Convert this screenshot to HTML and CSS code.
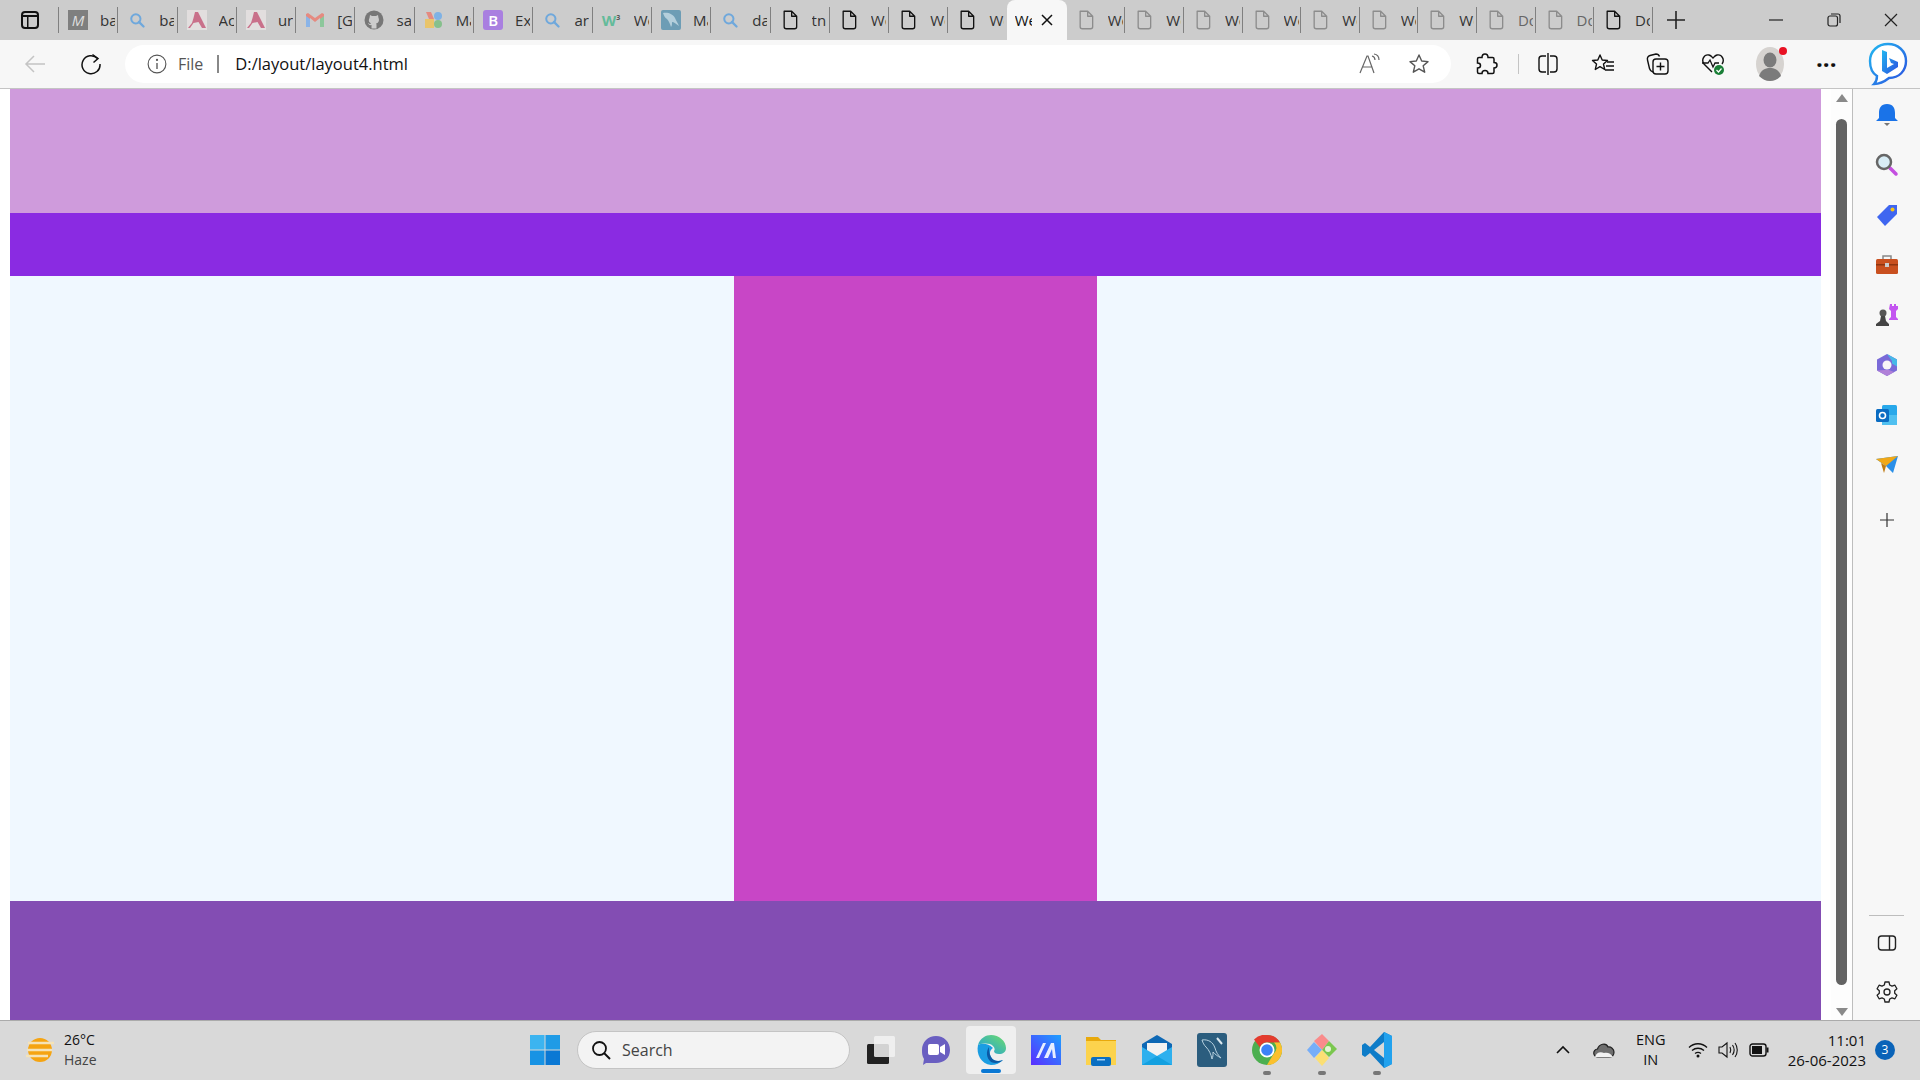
FILE: index.html
```html
<!DOCTYPE html>
<html lang="en">
<head>
    <meta charset="UTF-8">
    <meta name="viewport" content="width=device-width, initial-scale=1.0">
    <title>layout4</title>
    <link rel="stylesheet" href="styles.css">
</head>
<body>
    <svg class="defs" width="0" height="0">
        <symbol id="doc" viewBox="0 0 20 24"><path d="M3 1.5h9l6 6v12.5a2.5 2.5 0 0 1-2.5 2.500h-10a2.500 2.500 0 0 1-2.500-2.500z M12 1.500v6h6" fill="none" stroke="currentColor" stroke-width="1.600" stroke-linejoin="round"/></symbol>
        <symbol id="find" viewBox="-3 -3 26 26"><circle cx="8.500" cy="8.500" r="6" fill="none" stroke="#6fa8dc" stroke-width="2.600"/><path d="M12.500 12.500l6 6" stroke="#6fa8dc" stroke-width="3" stroke-linecap="round"/></symbol>
        <symbol id="acro" viewBox="0 0 20 20"><rect width="20" height="20" fill="#e2dede"/><path d="M8 2h3l8 16h-4l-3.500-6-5 1L3 18H1l4-5c1-3 2-7 3-11z" fill="#c9708a"/></symbol>
        <linearGradient id="edgeTop" x1="0" y1="1" x2="1" y2="0"><stop offset="0" stop-color="#1b9de2"/><stop offset="1" stop-color="#6fdc6a"/></linearGradient>
    </svg>

    <div class="tabstrip">
        <div class="winbtn">
            <svg width="20" height="20" viewBox="0 0 20 20"><rect x="2" y="2" width="16" height="16" rx="3" fill="none" stroke="#111" stroke-width="2"/><path d="M2 5h16v2H2z M7 6h1.500v12H7z" fill="#111"/></svg>
        </div>
        <div class="tabs">
            <div class="tab"><span class="favicon mbox">M</span><span class="tabtext">ba</span></div>
            <div class="tab"><svg class="favicon"><use href="#find"/></svg><span class="tabtext">ba</span></div>
            <div class="tab"><svg class="favicon"><use href="#acro"/></svg><span class="tabtext">Ac</span></div>
            <div class="tab"><svg class="favicon"><use href="#acro"/></svg><span class="tabtext">ur</span></div>
            <div class="tab"><svg class="favicon" viewBox="0 0 20 20"><path d="M1 4v13h4V8l5 4 5-4v9h4V4l-2-1-7 5-7-5z" fill="#e58a80"/><path d="M1 6v11h4V9z" fill="#8ab4e8"/><path d="M15 9v8h4V6z" fill="#8cc79b"/></svg><span class="tabtext">[G</span></div>
            <div class="tab"><svg class="favicon" viewBox="0 0 20 20"><circle cx="10" cy="10" r="9.500" fill="#777"/><path d="M6 5l2 1h4l2-1 .5 3c1 2 .5 5-2.500 5.500.5.500.5 1 .5 1.500v3.500h-5V15c-2 .5-3-.500-3.500-2 1 .5 1.500 1 2.500 1 0-.5.100-.5.500-.8C4.500 12.500 4.500 10 5.500 8z" fill="#ccc"/></svg><span class="tabtext">sa</span></div>
            <div class="tab"><svg class="favicon" viewBox="0 0 20 20"><rect x="1" y="9" width="9" height="9" fill="#e9c46a"/><path d="M2 2h5l3 7H5z" fill="#e58a80"/><rect x="10" y="2" width="8" height="8" rx="4" fill="#7fb2e5"/><rect x="10" y="10" width="8" height="8" rx="4" fill="#86c08c"/></svg><span class="tabtext">Ma</span></div>
            <div class="tab"><span class="favicon bbox">B</span><span class="tabtext">Ex</span></div>
            <div class="tab"><svg class="favicon"><use href="#find"/></svg><span class="tabtext">ar</span></div>
            <div class="tab"><span class="favicon w3">W<sup>3</sup></span><span class="tabtext">We</span></div>
            <div class="tab"><svg class="favicon" viewBox="0 0 20 20"><rect width="20" height="20" rx="2" fill="#6d9db5"/><path d="M2 3c5-1 10 1 12 5 1 3 3 5 4 8-3-2-5-4-7-4 0 2 0 4-1 5-1-3-2-6-4-8-2-1-3-3-4-6z" fill="#b4cfdc"/></svg><span class="tabtext">Ma</span></div>
            <div class="tab"><svg class="favicon"><use href="#find"/></svg><span class="tabtext">da</span></div>
            <div class="tab"><svg class="favicon"><use href="#doc"/></svg><span class="tabtext">tn</span></div>
            <div class="tab"><svg class="favicon"><use href="#doc"/></svg><span class="tabtext">We</span></div>
            <div class="tab"><svg class="favicon"><use href="#doc"/></svg><span class="tabtext">We</span></div>
            <div class="tab"><svg class="favicon"><use href="#doc"/></svg><span class="tabtext">We</span></div>
            <div class="tab active"><span class="tabtext">We</span><svg width="14" height="14" viewBox="0 0 14 14"><path d="M2 2l10 10M12 2L2 12" stroke="#111" stroke-width="1.500"/></svg></div>
            <div class="tab muted"><svg class="favicon"><use href="#doc"/></svg><span class="tabtext">We</span></div>
            <div class="tab muted"><svg class="favicon"><use href="#doc"/></svg><span class="tabtext">We</span></div>
            <div class="tab muted"><svg class="favicon"><use href="#doc"/></svg><span class="tabtext">We</span></div>
            <div class="tab muted"><svg class="favicon"><use href="#doc"/></svg><span class="tabtext">We</span></div>
            <div class="tab muted"><svg class="favicon"><use href="#doc"/></svg><span class="tabtext">We</span></div>
            <div class="tab muted"><svg class="favicon"><use href="#doc"/></svg><span class="tabtext">We</span></div>
            <div class="tab muted"><svg class="favicon"><use href="#doc"/></svg><span class="tabtext">We</span></div>
            <div class="tab muted"><svg class="favicon"><use href="#doc"/></svg><span class="tabtext grey">Do</span></div>
            <div class="tab muted"><svg class="favicon"><use href="#doc"/></svg><span class="tabtext grey">Do</span></div>
            <div class="tab muted last"><svg class="favicon dark"><use href="#doc"/></svg><span class="tabtext">Do</span></div>
        </div>
        <svg class="newtab" width="20" height="20" viewBox="0 0 20 20"><path d="M10 1v18M1 10h18" stroke="#222" stroke-width="1.600"/></svg>
        <div class="wincontrols">
            <svg width="14" height="14" viewBox="0 0 14 14"><path d="M0 7h14" stroke="#222" stroke-width="1.200"/></svg>
            <svg width="14" height="14" viewBox="0 0 14 14"><rect x="1" y="3" width="9.500" height="10" rx="2" fill="none" stroke="#222" stroke-width="1.200"/><path d="M4 1h7a2 2 0 0 1 2 2v7" fill="none" stroke="#222" stroke-width="1.200"/></svg>
            <svg width="14" height="14" viewBox="0 0 14 14"><path d="M1 1l12 12M13 1L1 13" stroke="#222" stroke-width="1.200"/></svg>
        </div>
    </div>

    <div class="toolbar">
        <svg class="back" width="22" height="20" viewBox="0 0 22 20"><path d="M21 10H2M10 2l-8 8 8 8" fill="none" stroke="#c4c4c4" stroke-width="1.500"/></svg>
        <svg class="reload" width="22" height="22" viewBox="0 0 22 22"><path d="M17.500 5.500A9 9 0 1 0 20 11" fill="none" stroke="#111" stroke-width="1.500"/><path d="M12.500 1.500l5.500 4-4.500 4" fill="none" stroke="#111" stroke-width="1.500"/></svg>
        <div class="address">
            <svg width="20" height="20" viewBox="0 0 18 18"><circle cx="9" cy="9" r="8" fill="none" stroke="#555" stroke-width="1"/><path d="M9 8v5.500" stroke="#555" stroke-width="1.200"/><circle cx="9" cy="5.300" r="1" fill="#555"/></svg>
            <span class="scheme">File</span>
            <span class="addr-sep"></span>
            <span class="url">D:/layout/layout4.html</span>
            <div class="addr-icons">
                <svg width="22" height="22" viewBox="0 0 22 22"><path d="M1 20L8 3h1l6 17M3.500 14h10" fill="none" stroke="#666" stroke-width="1.200"/><path d="M13 3c2 .5 3 2 3 4M15 1c3 .5 5 3 5 6" fill="none" stroke="#666" stroke-width="1.200"/></svg>
                <svg width="22" height="22" viewBox="0 0 22 22"><path d="M11 2l2.700 6 6.300.6-4.800 4.200 1.500 6.400L11 15.800l-5.700 3.400 1.500-6.400L2 8.600 8.300 8z" fill="none" stroke="#555" stroke-width="1.400" stroke-linejoin="round"/></svg>
            </div>
        </div>
        <div class="tools">
            <svg class="tool-ext" width="22" height="24" viewBox="0 0 22 24"><path d="M9 2c2 0 3 1.500 3 3.500h4.500c1 0 1.500.500 1.500 1.500v3.500c2 0 3 1 3 2.500s-1 3-3 3V20c0 1-.5 1.500-1.500 1.500H12c0-2-1-3-3-3s-3 1-3 3H3c-1 0-1.500-.5-1.500-1.500v-4c2 0 3-1 3-2.500s-1-2.500-3-2.500V7c0-1 .5-1.500 1.500-1.500h3C6 3.500 7 2 9 2z" fill="none" stroke="#111" stroke-width="1.500"/></svg>
            <span class="tool-sep"></span>
            <svg class="tool-split" width="20" height="22" viewBox="0 0 20 22"><rect x="1" y="3" width="18" height="16" rx="3" fill="none" stroke="#111" stroke-width="1.400"/><path d="M10 0v22" stroke="#f7f7f7" stroke-width="4"/><path d="M10 0v22" stroke="#111" stroke-width="1.400"/></svg>
            <svg class="tool-favs" width="24" height="22" viewBox="0 0 24 22"><path d="M9 2l2.200 5 5.300.5-4 3.600 1.200 5.400L9 13.700l-4.700 2.800 1.200-5.400-4-3.600L6.800 7z" fill="none" stroke="#111" stroke-width="1.400" stroke-linejoin="round"/><path d="M16 9h7M15 13h8M14 17h9" stroke="#111" stroke-width="1.400"/></svg>
            <svg class="tool-coll" width="24" height="24" viewBox="0 0 24 24"><path d="M7 20c-2-.5-3-1.500-3.500-3.500L1.500 8C1 6 2 4 4 3.500l6-1.500c2 0 3 1 3.500 2.500" fill="none" stroke="#111" stroke-width="1.400"/><rect x="7" y="7" width="15" height="15" rx="3" fill="none" stroke="#111" stroke-width="1.400"/><path d="M14.500 10.500v8M10.500 14.500h8" stroke="#111" stroke-width="1.400"/></svg>
            <svg class="tool-health" width="24" height="24" viewBox="0 0 24 24"><path d="M11 20L3 12C0 8 3 2 8 3c2 .5 3 2 4 3 1-1 2-2.500 4-3 5-1 8 5 5 9" fill="none" stroke="#111" stroke-width="1.400"/><path d="M1 11h6l2-3 3 7 2-4h4" fill="none" stroke="#111" stroke-width="1.300"/><circle cx="18" cy="18" r="5" fill="#1a7f37"/><path d="M15.500 18l2 2 3-3.500" fill="none" stroke="#fff" stroke-width="1.200"/></svg>
            <div class="avatar">
                <svg width="28" height="34" viewBox="0 0 28 34"><ellipse cx="14" cy="17" rx="14" ry="17" fill="#d6d3d0"/><ellipse cx="14" cy="13" rx="6.500" ry="7.500" fill="#7b7b7b"/><path d="M3 29c2-6 6-8 11-8s9 2 11 8c-3 3-7 5-11 5s-8-2-11-5z" fill="#7b7b7b"/></svg>
                <span class="dot"></span>
            </div>
            <span class="more">&middot;&middot;&middot;</span>
        </div>
        <svg class="bing" width="40" height="48" viewBox="0 0 40 48"><defs><linearGradient id="bingB" x1="0" y1="0" x2="1" y2="1"><stop offset="0" stop-color="#22b8f0"/><stop offset="1" stop-color="#2b4fe0"/></linearGradient></defs><path d="M20 4c10 0 18 7 18 17s-7 17-17 17c-5 4-11 6-15 6 2-2 3-4 3-8C4 33 2 27 2 21 2 11 10 4 20 4z" fill="#fff" stroke="url(#bingB)" stroke-width="2.400"/><path d="M14 10l5 2v16l7-4-3-1-2-5 9 4v5l-11 7-5-3z" fill="url(#bingB)"/></svg>
    </div>

    <div class="browser">
        <div class="viewport">
            <div class="layout">
                <header class="top"></header>
                <nav class="navbar"></nav>
                <main class="columns">
                    <section class="side"></section>
                    <section class="middle"></section>
                    <section class="side"></section>
                </main>
                <footer class="bottom"></footer>
            </div>
            <div class="scrollbar">
                <span class="arrow up"></span>
                <span class="thumb"></span>
                <span class="arrow down"></span>
            </div>
        </div>
        <aside class="sidebar">
            <svg width="24" height="24" viewBox="0 0 24 24"><path d="M12 1c6 0 8 4 8 9v5l3 3H1l3-3v-5c0-5 2-9 8-9z" fill="#1a73e8"/><path d="M9 20h6l-3 3z" fill="#777"/></svg>
            <svg width="24" height="24" viewBox="0 0 24 24"><path d="M15 15l6 6" stroke="#c44fe0" stroke-width="3.500" stroke-linecap="round"/><circle cx="9" cy="9" r="7" fill="#d8ecf5" stroke="#666" stroke-width="2.500"/></svg>
            <svg width="24" height="24" viewBox="0 0 24 24"><path d="M2 14L14 2h8v9L10 23z" fill="#3f66f0"/><circle cx="17.500" cy="6.500" r="2" fill="#f5c518"/></svg>
            <svg width="24" height="24" viewBox="0 0 24 24"><path d="M8 6V3h8v3" fill="none" stroke="#888" stroke-width="1.500"/><rect x="1" y="6" width="22" height="15" rx="1.500" fill="#c9501f"/><rect x="1" y="11" width="22" height="1.500" fill="#8f3510"/><rect x="10" y="10" width="4" height="4" fill="#ccc"/></svg>
            <svg width="24" height="24" viewBox="0 0 24 24"><path d="M15 1h2v2h2V1h2v2h2v3l-2 2v6l2 2v1h-9v-1l2-2V8l-2-2z" fill="#c355f0"/><circle cx="8" cy="10" r="3.500" fill="#555"/><path d="M6 13h4l1 5 3 3v2H1v-2l4-3z" fill="#444"/></svg>
            <svg width="24" height="24" viewBox="0 0 24 24"><path d="M12 1l10 5.500v11L12 23 2 17.500v-11z" fill="#7a6ad8"/><path d="M12 1l10 5.500v7l-5-3V8z" fill="#46b8e8"/><path d="M2 17.500l10 5.500 7-4-5-2-4 0z" fill="#b080d8"/><circle cx="12" cy="12" r="4.500" fill="#f7f7f7"/></svg>
            <svg width="24" height="24" viewBox="0 0 24 24"><rect x="7" y="2" width="15" height="20" rx="1.500" fill="#28a8ea"/><path d="M7 12h15v10H7z" fill="#50c0f0"/><rect x="1" y="6" width="13" height="13" rx="1.500" fill="#0a6cc2"/><circle cx="7.500" cy="12.500" r="3" fill="none" stroke="#fff" stroke-width="1.600"/></svg>
            <svg width="24" height="24" viewBox="0 0 24 24"><path d="M1 6l22-3-5 17-7-7z" fill="#2a8fe8"/><path d="M1 6l10 7 12-10z" fill="#f0a818"/><path d="M6 10l3 10 2-7z" fill="#c07a10"/></svg>
            <svg class="side-add" width="16" height="16" viewBox="0 0 16 16"><path d="M8 1v14M1 8h14" stroke="#333" stroke-width="1.200"/></svg>
            <span class="side-sep"></span>
            <svg width="20" height="18" viewBox="0 0 20 18"><rect x="1.500" y="2" width="17" height="14" rx="3" fill="none" stroke="#222" stroke-width="1.400"/><path d="M12.500 2v14" stroke="#222" stroke-width="1.400"/></svg>
            <svg class="gear" width="22" height="22" viewBox="0 0 22 22"><path d="M9 1h4l.7 3 2.300 1.200 2.900-1 2 3.500-2.200 2 0 2.600 2.200 2-2 3.500-2.900-1-2.300 1.200-.7 3H9l-.7-3L6 16.800l-2.900 1-2-3.500 2.200-2 0-2.600-2.200-2 2-3.500 2.900 1L8.300 4z" fill="none" stroke="#222" stroke-width="1.300" stroke-linejoin="round"/><circle cx="11" cy="11" r="3" fill="none" stroke="#222" stroke-width="1.300"/></svg>
        </aside>
    </div>

    <div class="taskbar">
        <div class="weather">
            <svg width="30" height="26" viewBox="0 0 30 26"><circle cx="15" cy="13" r="12" fill="#f5a412"/><path d="M3 6h26M2 13h25M1 19h22" stroke="#f5e3b8" stroke-width="2.500"/></svg>
            <div class="weather-text">
                <span>26°C</span>
                <span class="haze">Haze</span>
            </div>
        </div>
        <div class="apps">
            <svg class="app start" width="30" height="30" viewBox="0 0 30 30"><rect width="14.500" height="14.500" fill="#3cb4f0"/><rect x="15.500" width="14.500" height="14.500" fill="#1f9be6"/><rect y="15.500" width="14.500" height="14.500" fill="#1893e4"/><rect x="15.500" y="15.500" width="14.500" height="14.500" fill="#0a78d4"/></svg>
            <div class="search">
                <svg width="20" height="20" viewBox="0 0 20 20"><circle cx="8.500" cy="8.500" r="6.500" fill="none" stroke="#111" stroke-width="1.800"/><path d="M13 13l6 6" stroke="#111" stroke-width="2"/></svg>
                <span>Search</span>
            </div>
            <div class="appicons">
                <span class="appicon"><svg width="30" height="30" viewBox="0 0 30 30"><rect x="1" y="9" width="22" height="20" rx="1.500" fill="#222"/><rect x="8" y="1" width="21" height="21" rx="1.500" fill="#f2f2f2" opacity=".85"/></svg></span>
                <span class="appicon"><svg width="30" height="32" viewBox="0 0 30 32"><path d="M15 2c8 0 14 6 14 14s-6 13-14 13H5l-3 2 1-6C1 22 1 19 1 16 1 8 7 2 15 2z" fill="#6a5fc1"/><rect x="7" y="10" width="11" height="11" rx="2" fill="#fff"/><path d="M19 13l5-3v11l-5-3z" fill="#fff"/></svg></span>
                <span class="appicon current"><svg width="30" height="30" viewBox="0 0 30 30"><path d="M2 10C0 19 5 29 15 30c5 0 9-2 12-5-5 2-10 1-12-3-2-4-1-7 2-9C12 8 6 8 2 10z" fill="#1b9de2"/><path d="M13 12c-3 4-3 11 2 15 4 2 9 1 12-2-5 2-10 1-12-3-2-3-2-7-2-10z" fill="#0c59a4"/><path d="M2 10C4 3 10 0 15 0c8 0 15 6 15 13 0 4-3 6-7 6-3 0-5-1-5-3 1-1 1-3-1-5C14 8 8 8 2 10z" fill="url(#edgeTop)"/></svg><span class="running"></span></span>
                <span class="appicon"><svg width="30" height="30" viewBox="0 0 30 30"><defs><linearGradient id="mas" x1="0" y1="1" x2="1" y2="0"><stop offset="0" stop-color="#5a2dff"/><stop offset="1" stop-color="#1ea0ff"/></linearGradient></defs><rect width="30" height="30" fill="url(#mas)"/><path d="M5 23l7-15h3l-7 15zM13 23l7-15h3l2 15h-3l-1-9-4 9z" fill="#e8eeff"/></svg></span>
                <span class="appicon"><svg width="30" height="32" viewBox="0 0 30 32"><path d="M0 3h12l3 3h15v25H0z" fill="#e8a90c"/><rect y="7" width="30" height="24" fill="#fcd34d"/><rect x="5" y="23" width="20" height="9" rx="2" fill="#0a6fc2"/><rect x="11" y="25" width="8" height="1.500" fill="#9ed0f5"/></svg></span>
                <span class="appicon"><svg width="30" height="32" viewBox="0 0 30 32"><path d="M15 1L0 10v20h30V10z" fill="#0e68b5"/><path d="M5 9h20v8l-10 6-10-6z" fill="#f2f2f2"/><path d="M0 13l15 9 15-9v18H0z" fill="#2eb0ee"/><path d="M0 31l15-9 15 9z" fill="#13a0e0"/></svg></span>
                <span class="appicon"><svg width="30" height="34" viewBox="0 0 30 34"><rect width="30" height="34" rx="3" fill="#2b5d7e"/><path d="M5 7c6-1 11 2 13 8 1 4 3 7 6 10-4-2-6-4-8-6 0 3 0 5-1 7-1-5-3-9-6-12-2-2-3-4-4-7z" fill="none" stroke="#b8d2e0" stroke-width="1"/><path d="M20 5l5 6" stroke="#dbe8ef" stroke-width="2"/></svg></span>
                <span class="appicon"><svg width="30" height="30" viewBox="0 0 30 30"><circle cx="15" cy="15" r="15" fill="#4caf50"/><path d="M15 0a15 15 0 0 1 13 7.500H15a7.500 7.500 0 0 0-7 5L2 4.500A15 15 0 0 1 15 0z" fill="#e33b2e"/><path d="M28 7.500A15 15 0 0 1 15 30l6.500-11A7.500 7.500 0 0 0 22 7.500z" fill="#fbc02d"/><circle cx="15" cy="15" r="7.500" fill="#fff"/><circle cx="15" cy="15" r="5.800" fill="#3b82f6"/></svg><span class="pin"></span></span>
                <span class="appicon"><svg width="30" height="32" viewBox="0 0 30 32"><path d="M15 0l7 7-7 9-8-9z" fill="#f98b8b"/><path d="M22 7l8 8-8 8-7-7z" fill="#7ac74f"/><path d="M7 8l8 8-8 8-7-8z" fill="#76aef8"/><path d="M15 16l7 8-7 8-7-8z" fill="#fbdf74"/><circle cx="21" cy="15" r="3" fill="#e4f3d4"/></svg><span class="pin"></span></span>
                <span class="appicon"><svg width="30" height="36" viewBox="0 0 30 36"><path d="M22 0l8 4v28l-8 4L8 21l-5 4-3-2v-10l3-2 5 4z" fill="#0e7cc8"/><path d="M22 0l8 4v28l-8 4z" fill="#22a2ee"/><path d="M22 10L12 18l10 8z" fill="#d9d9d9"/></svg><span class="pin"></span></span>
            </div>
        </div>
        <div class="tray">
            <svg class="chev" width="16" height="10" viewBox="0 0 16 10"><path d="M2 8l6-6 6 6" fill="none" stroke="#111" stroke-width="1.600"/></svg>
            <svg class="cloud" width="22" height="16" viewBox="0 0 22 16"><path d="M5 15a4 4 0 0 1-.5-8C6 2 13 0 15 5c3-.5 6 2 6 5s-2 5-5 5z" fill="#6e6e6e" stroke="#222" stroke-width="1.200"/><path d="M2 15c1-4 5-6 9-4 3-1 7 0 9 4z" fill="#f2f2f2"/></svg>
            <div class="lang"><span>ENG</span><span>IN</span></div>
            <svg class="wifi" width="20" height="16" viewBox="0 0 20 16"><path d="M1 5.500c5-5 13-5 18 0M4 8.500c3.500-3 8.500-3 12 0M7 11.500c2-1.500 4-1.500 6 0" fill="none" stroke="#111" stroke-width="1.300"/><circle cx="10" cy="14" r="1.500" fill="#111"/></svg>
            <svg class="sound" width="20" height="18" viewBox="0 0 20 18"><path d="M1 6h3l5-4v14l-5-4H1z" fill="none" stroke="#111" stroke-width="1.100"/><path d="M12 6c1 2 1 4 0 6M14.500 4c2 3 2 7 0 10M17 2c3 4 3 10 0 14" fill="none" stroke="#111" stroke-width="1.100"/></svg>
            <svg class="battery" width="20" height="14" viewBox="0 0 20 14"><rect x="1" y="1" width="16" height="12" rx="2.500" fill="none" stroke="#111" stroke-width="1.400"/><rect x="3" y="3" width="10" height="8" fill="#111"/><rect x="17.500" y="4.500" width="2" height="5" fill="#111"/></svg>
            <div class="clock"><span>11:01</span><span>26-06-2023</span></div>
            <span class="badge">3</span>
        </div>
    </div>
</body>
</html>
```

FILE: styles.css
```css
html, body {
    height: 100%;
}
body {
    margin: 0;
    padding: 0;
    display: flex;
    flex-direction: column;
    overflow: hidden;
    font-family: "Open Sans", "Noto Sans", sans-serif;
    color: #111;
    background: #fff;
}
.defs {
    position: absolute;
}

/* tab strip */
.tabstrip {
    height: 40px;
    flex: none;
    display: flex;
    align-items: center;
    background: #cccccc;
}
.winbtn {
    width: 59px;
    flex: none;
    box-sizing: border-box;
    padding-left: 20px;
    display: flex;
    border-right: 1px solid #808080;
    height: 26px;
    align-items: center;
}
.tabs {
    display: flex;
    height: 40px;
    align-items: center;
}
.tab {
    width: 59.3px;
    height: 26px;
    box-sizing: border-box;
    flex: none;
    display: flex;
    align-items: center;
    gap: 12px;
    padding-left: 9px;
    border-right: 1px solid #808080;
    overflow: hidden;
    font-size: 15px;
    color: #333;
}
.tab.muted {
    width: 58.6px;
}
.tab.muted .favicon {
    color: #8c8c8c;
}
.tab.muted .favicon.dark {
    color: #111;
}
.tab.active {
    width: 60px;
    height: 40px;
    margin-left: -1px;
    background: #f7f7f7;
    border: 0;
    border-radius: 8px 8px 0 0;
    padding-left: 8px;
    gap: 8px;
    color: #111;
}
.tabtext {
    width: 15px;
    flex: none;
    white-space: nowrap;
    overflow: hidden;
}
.tab.active .tabtext {
    width: 17px;
}
.tabtext.grey {
    color: #666;
}
.favicon {
    width: 20px;
    height: 20px;
    flex: none;
    color: #111;
}
.mbox {
    background: #7f7f7f;
    color: #ddd;
    font-style: italic;
    font-size: 15px;
    line-height: 20px;
    text-align: center;
}
.bbox {
    background: #a97fe0;
    color: #fff;
    border-radius: 3px;
    font-size: 15px;
    font-weight: 600;
    line-height: 20px;
    text-align: center;
}
.w3 {
    color: #63bb9a;
    font-size: 15px;
    font-weight: 700;
    line-height: 20px;
}
.w3 sup {
    font-size: 7px;
    color: #555;
    line-height: 0;
}
.newtab {
    margin-left: 13px;
    flex: none;
}
.wincontrols {
    margin-left: auto;
    width: 151px;
    padding-right: 22px;
    box-sizing: border-box;
    display: flex;
    justify-content: space-between;
    flex: none;
}

/* toolbar */
.toolbar {
    height: 49px;
    flex: none;
    box-sizing: border-box;
    display: flex;
    align-items: center;
    background: #f7f7f7;
    border-bottom: 1px solid #c4c4c4;
    padding: 0 0 1px 24px;
}
.back {
    flex: none;
}
.reload {
    flex: none;
    margin-left: 34px;
}
.address {
    margin-left: 23px;
    width: 1326px;
    height: 38px;
    flex: none;
    box-sizing: border-box;
    background: #fff;
    border-radius: 19px;
    display: flex;
    align-items: center;
    padding: 0 21px 0 22px;
    font-size: 16px;
}
.scheme {
    margin-left: 11px;
    color: #555;
}
.addr-sep {
    width: 2px;
    height: 18px;
    background: #888;
    margin: 0 16px 0 14px;
}
.url {
    color: #111;
    font-size: 16.500px;
    white-space: nowrap;
}
.addr-icons {
    margin-left: auto;
    display: flex;
    gap: 27px;
}
.tools {
    display: flex;
    align-items: center;
    margin-left: 25px;
}
.tool-sep {
    width: 1px;
    height: 20px;
    background: #c4c4c4;
    margin: 0 19px 0 20px;
}
.tool-favs {
    margin-left: 33px;
}
.tool-coll {
    margin-left: 31px;
}
.tool-health {
    margin-left: 31px;
}
.avatar {
    position: relative;
    margin-left: 31px;
    height: 34px;
    display: flex;
}
.dot {
    position: absolute;
    top: 0;
    right: -3px;
    width: 8px;
    height: 8px;
    border-radius: 50%;
    background: #e81123;
}
.more {
    margin-left: 32px;
    font-size: 24px;
    line-height: 24px;
    font-weight: 700;
}
.bing {
    margin-left: auto;
    margin-right: 12px;
    flex: none;
}

/* page area */
.browser {
    flex: 1;
    display: flex;
    min-height: 0;
}
.viewport {
    flex: 1;
    display: flex;
    background: #fff;
    padding-left: 10px;
    border-right: 1px solid #bdbdbd;
}
.layout {
    width: 1811px;
    display: flex;
    flex-direction: column;
}
.top {
    height: 124px;
    background: #cf9bdc;
}
.navbar {
    height: 63px;
    background: #8a2be2;
}
.columns {
    flex: 1;
    display: flex;
}
.side {
    flex: 724;
    background: #f0f8ff;
}
.middle {
    flex: 363;
    background: #c846c6;
}
.bottom {
    height: 119px;
    background: #834db3;
}
.scrollbar {
    flex: 1;
    margin-left: 10px;
    background: #fdfdfd;
    display: flex;
    flex-direction: column;
    align-items: center;
    padding: 5px 0 4px;
}
.arrow {
    width: 0;
    height: 0;
    border-left: 6px solid transparent;
    border-right: 6px solid transparent;
}
.arrow.up {
    border-bottom: 8px solid #8a8a8a;
}
.arrow.down {
    border-top: 8px solid #8a8a8a;
}
.thumb {
    flex: 1;
    width: 11px;
    margin: 17px 0 23px;
    background: #636363;
    border-radius: 6px;
}
.sidebar {
    width: 67px;
    flex: none;
    background: #f7f7f7;
    display: flex;
    flex-direction: column;
    align-items: center;
    gap: 26px;
    padding-top: 14px;
    box-sizing: border-box;
}
.side-add {
    margin-top: 9px;
}
.side-sep {
    width: 35px;
    height: 1px;
    background: #bdbdbd;
    margin-top: auto;
    margin-bottom: -8px;
}
.gear {
    margin-top: 3px;
    margin-bottom: 17px;
}

/* taskbar */
.taskbar {
    height: 60px;
    flex: none;
    box-sizing: border-box;
    display: flex;
    align-items: center;
    background: #d9d9d9;
    border-top: 1px solid #ababab;
    padding: 0 0 2px 25px;
}
.weather {
    width: 505px;
    flex: none;
    display: flex;
    align-items: center;
    gap: 9px;
}
.weather-text {
    display: flex;
    flex-direction: column;
    font-size: 14px;
    line-height: 20px;
}
.haze {
    color: #444;
}
.apps {
    display: flex;
    align-items: center;
}
.app.start {
    flex: none;
}
.search {
    margin-left: 17px;
    width: 273px;
    height: 38px;
    box-sizing: border-box;
    background: #f3f3f3;
    border: 1px solid #c4c4c4;
    border-radius: 19px;
    display: flex;
    align-items: center;
    gap: 11px;
    padding-left: 13px;
    font-size: 16px;
    color: #444;
}
.appicons {
    display: flex;
    margin-left: 3px;
}
.appicon {
    position: relative;
    width: 55.200px;
    height: 48px;
    display: flex;
    align-items: center;
    justify-content: center;
}
.appicon.current::before {
    content: "";
    position: absolute;
    inset: 0 3px;
    background: #efefef;
    border-radius: 4px;
}
.appicon svg {
    position: relative;
}
.running {
    position: absolute;
    left: 50%;
    bottom: 1px;
    width: 20px;
    height: 4px;
    margin-left: -10px;
    background: #0a78d4;
    border-radius: 2px;
}
.pin {
    position: absolute;
    left: 50%;
    bottom: -1px;
    width: 8px;
    height: 4px;
    margin-left: -4px;
    background: #777;
    border-radius: 2px;
}
.tray {
    margin-left: auto;
    display: flex;
    align-items: center;
    padding-right: 25px;
    font-size: 14.500px;
}
.cloud {
    margin-left: 22px;
}
.lang {
    margin-left: 16px;
    width: 40px;
    display: flex;
    flex-direction: column;
    align-items: center;
    line-height: 20px;
}
.wifi {
    margin-left: 17px;
}
.sound {
    margin-left: 10px;
}
.battery {
    margin-left: 11px;
}
.clock {
    margin-left: 19px;
    display: flex;
    flex-direction: column;
    align-items: flex-end;
    font-size: 15px;
    line-height: 20px;
}
.badge {
    margin-left: 9px;
    width: 20px;
    height: 20px;
    border-radius: 50%;
    background: #0a63b8;
    color: #fff;
    font-size: 12px;
    line-height: 20px;
    text-align: center;
}
```
